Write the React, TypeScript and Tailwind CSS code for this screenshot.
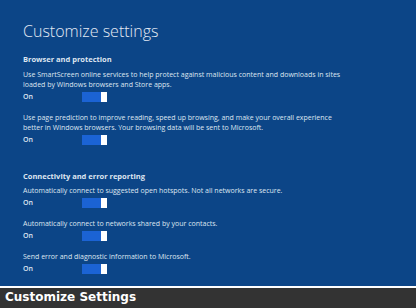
const Toggle = () => (
    <div className="flex h-[10px] w-[25px] bg-[#1b63d4]">
        <div className="flex-1" />
        <div className="w-[6px] bg-white" />
    </div>
);

const Setting = ({ text, mt }: { text: string[]; mt: string }) => (
    <div className={mt}>
        {text.map((t, i) => (
            <p key={i} className="h-[10px] leading-[10px] whitespace-nowrap">{t}</p>
        ))}
        <div className="mt-[2px] flex h-[10px] items-center">
            <span className="w-[59px] font-semibold">On</span>
            <Toggle />
        </div>
    </div>
);

export default function App() {
    return (
        <div className="flex h-[308px] w-[416px] flex-col overflow-hidden">
            <div className="flex-1 bg-[#0c4587] pl-[23px] pt-[21px] text-[7px] text-[#dfe6f1]" style={{ fontFamily: '"Open Sans", sans-serif' }}>
                <h1 className="h-[20px] text-[16px] font-light leading-[20px] text-[#e4eaf4]">Customize settings</h1>
                <p className="mt-[13px] h-[10px] text-[7.5px] font-bold leading-[10px]">Browser and protection</p>
                <Setting
                    mt="mt-[6px]"
                    text={[
                        "Use SmartScreen online services to help protect against malicious content and downloads in sites",
                        "loaded by Windows browsers and Store apps.",
                    ]}
                />
                <Setting
                    mt="mt-[11px]"
                    text={[
                        "Use page prediction to improve reading, speed up browsing, and make your overall experience",
                        "better in Windows browsers. Your browsing data will be sent to Microsoft.",
                    ]}
                />
                <p className="mt-[26px] h-[10px] text-[7.5px] font-bold leading-[10px]">Connectivity and error reporting</p>
                <Setting mt="mt-[5px]" text={["Automatically connect to suggested open hotspots. Not all networks are secure."]} />
                <Setting mt="mt-[11px]" text={["Automatically connect to networks shared by your contacts."]} />
                <Setting mt="mt-[11px]" text={["Send error and diagnostic information to Microsoft."]} />
            </div>
            <div className="h-[22px] border-t-2 border-white bg-[#333333] pl-[5px]">
                <p className="text-[12px] font-bold leading-[19px] text-white" style={{ fontFamily: '"DejaVu Sans", sans-serif' }}>Customize Settings</p>
            </div>
        </div>
    );
}
